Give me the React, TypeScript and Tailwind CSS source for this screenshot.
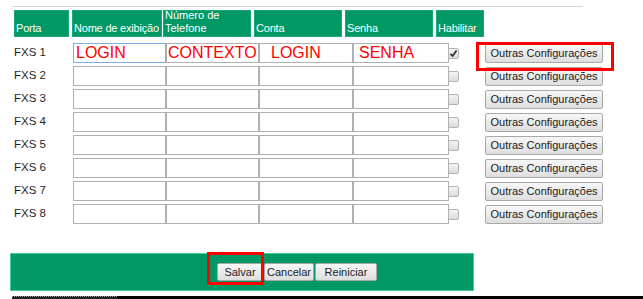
import React from "react";

const rows = ["FXS 1", "FXS 2", "FXS 3", "FXS 4", "FXS 5", "FXS 6", "FXS 7", "FXS 8"];

const headers = [
  { label: "Porta", w: "w-[55px]", ml: "ml-0" },
  { label: "Nome de exibição", w: "w-[90px]", ml: "ml-[3px]" },
  { label: "Número de Telefone", w: "w-[88px]", ml: "ml-[1px]" },
  { label: "Conta", w: "w-[88px]", ml: "ml-[3px]" },
  { label: "Senha", w: "w-[88px]", ml: "ml-[3px]" },
  { label: "Habilitar", w: "w-[48px]", ml: "ml-[3px]" },
];

const inputWidths = ["w-[93px]", "w-[93px]", "w-[94px]", "w-[96px]"];

const firstValues = [
  { text: "LOGIN", pl: "pl-[2px]" },
  { text: "CONTEXTO", pl: "pl-[1px]" },
  { text: "LOGIN", pl: "pl-[11px]" },
  { text: "SENHA", pl: "pl-[5px]" },
];

function GrayButton({ children, className = "" }: { children: React.ReactNode; className?: string }) {
  return (
    <div
      className={`flex items-center justify-center rounded-[2px] border border-[#a8a8a8] bg-gradient-to-b from-[#f7f7f7] to-[#dedede] text-[11px] text-[#1b1b1b] ${className}`}
    >
      {children}
    </div>
  );
}

function Checkbox({ checked }: { checked: boolean }) {
  return (
    <div className="flex h-[11px] w-[11px] items-center justify-center rounded-[2px] border border-[#b3b3b3] bg-gradient-to-b from-[#f4f4f4] to-[#dcdcdc]">
      {checked && (
        <svg width="9" height="9" viewBox="0 0 9 9">
          <path d="M1.5 4.8 L3.6 7 L7.6 1.6" fill="none" stroke="#2a2a2a" strokeWidth="1.7" />
        </svg>
      )}
    </div>
  );
}

export default function App() {
  return (
    <div className="relative h-[299px] w-[643px] overflow-hidden bg-white font-['Liberation_Sans',Arial,sans-serif]">
      <div className="ml-[12px] mt-[6px] h-px w-[571px] bg-[#d4d4d4]" />

      {/* header */}
      <div className="ml-[14px] mt-[3px] flex h-[27px]">
        {headers.map((h) => (
          <div
            key={h.label}
            className={`${h.w} ${h.ml} flex items-end border border-[#1aa677] bg-[#009966] pb-[1px] pl-[1px] text-[11px] leading-[13px] text-white`}
          >
            <span className={h.label === "Número de Telefone" ? "" : "whitespace-nowrap tracking-[-0.2px]"}>
              {h.label}
            </span>
          </div>
        ))}
      </div>

      {/* rows */}
      <div className="mt-[6px] flex flex-col gap-[3px]">
        {rows.map((r, i) => (
          <div key={r} className="flex h-[20px] items-center">
            <div className="ml-[14px] w-[59px] text-[11.5px] text-[#1f1f1f]">{r}</div>
            {inputWidths.map((w, j) => (
              <div
                key={j}
                className={`${w} h-[20px] border ${i === 0 && j === 0 ? "border-[#80aee0]" : "border-[#b0b0b0]"} flex items-center bg-white`}
              >
                {i === 0 && (
                  <span className={`${firstValues[j].pl} text-[16px] leading-none text-[#ff0000]`}>
                    {firstValues[j].text}
                  </span>
                )}
              </div>
            ))}
            <div className="-ml-[1px]">
              <Checkbox checked={i === 0} />
            </div>
            <GrayButton className="ml-[26px] h-[19px] w-[118px]">Outras Configurações</GrayButton>
          </div>
        ))}
      </div>

      {/* footer */}
      <div className="ml-[10px] mt-[29px] flex h-[38px] w-[464px] items-center border border-[#3fcf9c] bg-[#009966] pl-[206px]">
        <GrayButton className="h-[18px] w-[46px]">Salvar</GrayButton>
        <GrayButton className="ml-[1px] h-[18px] w-[50px]">Cancelar</GrayButton>
        <GrayButton className="ml-[1px] h-[18px] w-[62px]">Reiniciar</GrayButton>
      </div>

      <div className="ml-[12px] mt-[5px] flex h-[3px]">
        <div className="h-[3px] w-[105px] border-t border-dotted border-[#999] bg-[#222]" />
        <div className="h-[3px] flex-1 bg-black" />
      </div>

      {/* annotation boxes */}
      <div className="absolute left-[476px] top-[42px] h-[29px] w-[138px] border-[3px] border-[#f00]" />
      <div className="absolute left-[207px] top-[252px] h-[33px] w-[57px] border-[3px] border-[#f00]" />
    </div>
  );
}
